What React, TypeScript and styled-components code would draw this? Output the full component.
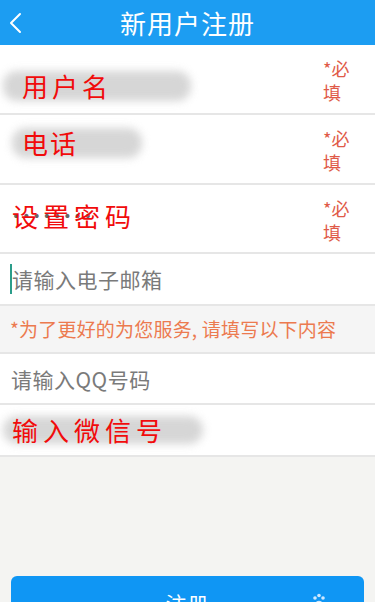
import React from "react";
import styled, { createGlobalStyle } from "styled-components";

const GlobalStyle = createGlobalStyle`
  html, body {
    margin: 0;
    padding: 0;
    background: #f4f4f2;
    font-family: "Noto Sans CJK SC", "Noto Sans", sans-serif;
  }
  * { box-sizing: border-box; }
`;

const Page = styled.div`
  width: 375px;
  min-height: 602px;
  display: flex;
  flex-direction: column;
  background: #f4f4f2;
  overflow: hidden;
`;

const Header = styled.header`
  height: 45px;
  background: #1c9df2;
  display: grid;
  grid-template-columns: 45px 1fr 45px;
  align-items: center;
`;

const BackButton = styled.button`
  border: 0;
  background: transparent;
  padding: 0 0 0 8px;
  height: 45px;
  display: flex;
  align-items: center;
  cursor: pointer;
`;

const Title = styled.h1`
  margin: 0;
  text-align: center;
  color: #ffffff;
  font-size: 26px;
  font-weight: 400;
  letter-spacing: 1px;
  line-height: 45px;
`;

const Form = styled.div`
  background: #ffffff;
  display: flex;
  flex-direction: column;
`;

const Row = styled.div<{ $h: number; $pl?: number; $muted?: boolean }>`
  height: ${(p) => p.$h}px;
  padding-left: ${(p) => p.$pl ?? 11}px;
  padding-right: 24px;
  display: flex;
  align-items: center;
  border-bottom: 2px solid #e6e6e6;
  background: ${(p) => (p.$muted ? "#f5f5f5" : "#ffffff")};
  position: relative;
`;

const LabelWrap = styled.div<{ $dy: number }>`
  position: relative;
  flex: 1;
  display: flex;
  align-items: center;
  transform: translateY(${(p) => p.$dy}px);
`;

const Smear = styled.span<{ $w: number; $x: number; $h: number }>`
  position: absolute;
  left: ${(p) => p.$x}px;
  top: 50%;
  width: ${(p) => p.$w}px;
  height: ${(p) => p.$h}px;
  margin-top: ${(p) => -p.$h / 2}px;
  background: #cfcfcf;
  border-radius: 14px;
  filter: blur(4px);
  opacity: 0.85;
`;

const Dots = styled.span`
  position: absolute;
  left: 0;
  top: 50%;
  margin-top: -2px;
  color: #666;
  font-size: 14px;
  line-height: 4px;
  letter-spacing: 2px;
  font-family: "DejaVu Sans", sans-serif;
`;

const RedLabel = styled.span<{ $ls: number }>`
  position: relative;
  color: #f10b0b;
  font-size: 26px;
  letter-spacing: ${(p) => p.$ls}px;
  line-height: 30px;
  font-weight: 400;
`;

const Required = styled.span`
  color: #e05a48;
  font-size: 18px;
  line-height: 24px;
  width: 28px;
  margin-top: 2px;
`;

const Placeholder = styled.span`
  color: #7a7a7a;
  font-size: 21px;
  line-height: 28px;
  letter-spacing: 0.5px;
`;

const Cursor = styled.span`
  width: 2px;
  height: 30px;
  background: #2b9d8a;
`;

const Notice = styled.span`
  color: #ec7a4f;
  font-size: 19px;
  line-height: 26px;
  letter-spacing: 0.2px;
  white-space: nowrap;
`;

const Footer = styled.div`
  padding: 119px 11px 0 11px;
`;

const SubmitButton = styled.button`
  width: 353px;
  height: 50px;
  border: 0;
  border-radius: 6px;
  background: #0f96f4;
  color: #ffffff;
  font-family: "Noto Sans CJK SC", sans-serif;
  font-size: 21px;
  display: flex;
  justify-content: center;
  align-items: flex-start;
  padding-top: 12px;
  position: relative;
  letter-spacing: 1px;
`;

const Paw = styled.svg`
  position: absolute;
  left: 300px;
  top: 17px;
`;

type FieldProps = {
  label: string;
  ls: number;
  dy: number;
  pl: number;
  h: number;
  smear?: { w: number; x: number; h: number };
  dots?: boolean;
  required?: boolean;
};

function LabelField({ label, ls, dy, pl, h, smear, dots, required }: FieldProps) {
  return (
    <Row $h={h} $pl={pl}>
      <LabelWrap $dy={dy}>
        {smear && <Smear $w={smear.w} $x={smear.x} $h={smear.h} />}
        {dots && <Dots>••••••••</Dots>}
        <RedLabel $ls={ls}>{label}</RedLabel>
      </LabelWrap>
      {required && (
        <Required>
          *必
          <br />填
        </Required>
      )}
    </Row>
  );
}

export default function App() {
  return (
    <>
      <GlobalStyle />
      <Page>
        <Header>
          <BackButton aria-label="返回">
            <svg width="16" height="22" viewBox="0 0 16 22">
              <path d="M12 2 L3 11 L12 20" fill="none" stroke="#fff" strokeWidth="2" strokeLinecap="round" strokeLinejoin="round" />
            </svg>
          </BackButton>
          <Title>新用户注册</Title>
          <span />
        </Header>
        <Form>
          <LabelField label="用户名" ls={4} dy={7} pl={22} h={70} smear={{ w: 188, x: -19, h: 30 }} required />
          <LabelField label="电话" ls={2} dy={-6} pl={22} h={70} smear={{ w: 130, x: -10, h: 30 }} required />
          <LabelField label="设置密码" ls={5} dy={-3} pl={12} h={69} dots required />
          <Row $h={52} $pl={10}>
            <Cursor />
            <Placeholder>请输入电子邮箱</Placeholder>
          </Row>
          <Row $h={48} $pl={10} $muted>
            <Notice>*为了更好的为您服务, 请填写以下内容</Notice>
          </Row>
          <Row $h={51} $pl={11}>
            <Placeholder>请输入QQ号码</Placeholder>
          </Row>
          <LabelField label="输入微信号" ls={5} dy={0} pl={12} h={52} smear={{ w: 200, x: -9, h: 28 }} />
        </Form>
        <Footer>
          <SubmitButton>
            注册
            <Paw width="16" height="12" viewBox="0 0 16 12">
              <circle cx="4" cy="5" r="1.8" fill="#cfe8ff" />
              <circle cx="8" cy="2.5" r="1.8" fill="#cfe8ff" />
              <circle cx="12" cy="5" r="1.8" fill="#cfe8ff" />
              <ellipse cx="8" cy="10" rx="3" ry="2.2" fill="#cfe8ff" />
            </Paw>
          </SubmitButton>
        </Footer>
      </Page>
    </>
  );
}
